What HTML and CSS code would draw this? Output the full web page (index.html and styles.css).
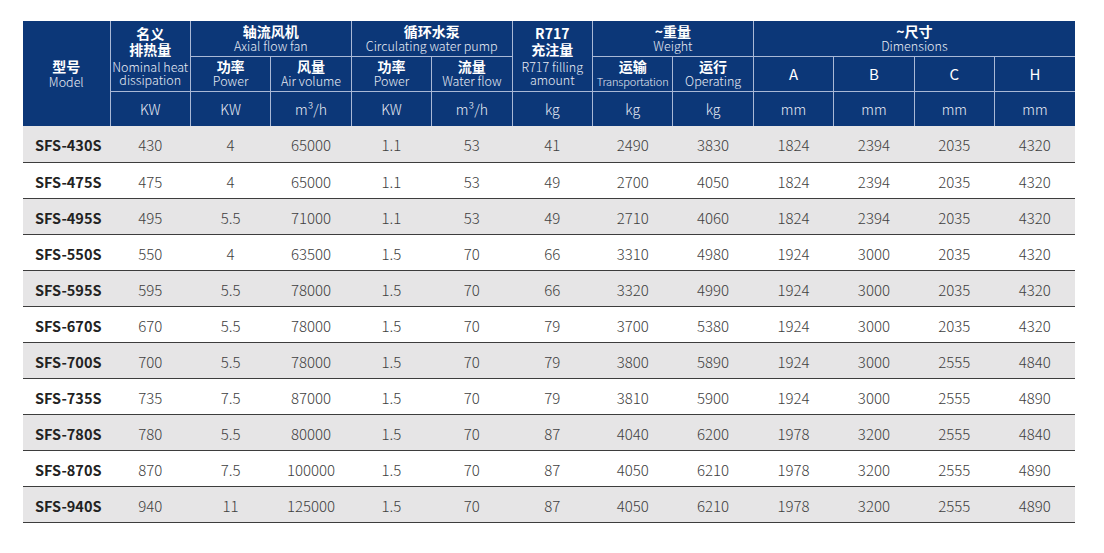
FILE: index.html
```html
<!DOCTYPE html>
<html lang="zh">
<head>
<meta charset="utf-8">
<title>SFS</title>
<link rel="stylesheet" href="styles.css">
</head>
<body>
<div class="page">
<table class="spec">
<colgroup>
<col class="c-model">
<col span="12" class="c-val">
</colgroup>
<thead>
<tr class="h1">
<th rowspan="3" class="model-h"><span class="zh">型号</span><span class="en">Model</span></th>
<th rowspan="2" class="tall"><span class="zh">名义<br>排热量</span><span class="en">Nominal heat<br>dissipation</span></th>
<th colspan="2"><span class="zh">轴流风机</span><span class="en">Axial flow fan</span></th>
<th colspan="2"><span class="zh">循环水泵</span><span class="en">Circulating water pump</span></th>
<th rowspan="2" class="tall"><span class="zh">R717<br>充注量</span><span class="en">R717 filling<br>amount</span></th>
<th colspan="2"><span class="zh">~重量</span><span class="en">Weight</span></th>
<th colspan="4"><span class="zh">~尺寸</span><span class="en">Dimensions</span></th>
</tr>
<tr class="h2">
<th><span class="zh">功率</span><span class="en">Power</span></th>
<th><span class="zh">风量</span><span class="en">Air volume</span></th>
<th><span class="zh">功率</span><span class="en">Power</span></th>
<th><span class="zh">流量</span><span class="en">Water flow</span></th>
<th><span class="zh">运输</span><span class="en small">Transportation</span></th>
<th><span class="zh">运行</span><span class="en">Operating</span></th>
<th class="dim">A</th>
<th class="dim">B</th>
<th class="dim">C</th>
<th class="dim">H</th>
</tr>
<tr class="h3">
<th>KW</th><th>KW</th><th>m³/h</th><th>KW</th><th>m³/h</th><th>kg</th><th>kg</th><th>kg</th><th>mm</th><th>mm</th><th>mm</th><th>mm</th>
</tr>
</thead>
<tbody>
<tr><td class="m">SFS-430S</td><td>430</td><td>4</td><td>65000</td><td>1.1</td><td>53</td><td>41</td><td>2490</td><td>3830</td><td>1824</td><td>2394</td><td>2035</td><td>4320</td></tr>
<tr><td class="m">SFS-475S</td><td>475</td><td>4</td><td>65000</td><td>1.1</td><td>53</td><td>49</td><td>2700</td><td>4050</td><td>1824</td><td>2394</td><td>2035</td><td>4320</td></tr>
<tr><td class="m">SFS-495S</td><td>495</td><td>5.5</td><td>71000</td><td>1.1</td><td>53</td><td>49</td><td>2710</td><td>4060</td><td>1824</td><td>2394</td><td>2035</td><td>4320</td></tr>
<tr><td class="m">SFS-550S</td><td>550</td><td>4</td><td>63500</td><td>1.5</td><td>70</td><td>66</td><td>3310</td><td>4980</td><td>1924</td><td>3000</td><td>2035</td><td>4320</td></tr>
<tr><td class="m">SFS-595S</td><td>595</td><td>5.5</td><td>78000</td><td>1.5</td><td>70</td><td>66</td><td>3320</td><td>4990</td><td>1924</td><td>3000</td><td>2035</td><td>4320</td></tr>
<tr><td class="m">SFS-670S</td><td>670</td><td>5.5</td><td>78000</td><td>1.5</td><td>70</td><td>79</td><td>3700</td><td>5380</td><td>1924</td><td>3000</td><td>2035</td><td>4320</td></tr>
<tr><td class="m">SFS-700S</td><td>700</td><td>5.5</td><td>78000</td><td>1.5</td><td>70</td><td>79</td><td>3800</td><td>5890</td><td>1924</td><td>3000</td><td>2555</td><td>4840</td></tr>
<tr><td class="m">SFS-735S</td><td>735</td><td>7.5</td><td>87000</td><td>1.5</td><td>70</td><td>79</td><td>3810</td><td>5900</td><td>1924</td><td>3000</td><td>2555</td><td>4890</td></tr>
<tr><td class="m">SFS-780S</td><td>780</td><td>5.5</td><td>80000</td><td>1.5</td><td>70</td><td>87</td><td>4040</td><td>6200</td><td>1978</td><td>3200</td><td>2555</td><td>4840</td></tr>
<tr><td class="m">SFS-870S</td><td>870</td><td>7.5</td><td>100000</td><td>1.5</td><td>70</td><td>87</td><td>4050</td><td>6210</td><td>1978</td><td>3200</td><td>2555</td><td>4890</td></tr>
<tr><td class="m">SFS-940S</td><td>940</td><td>11</td><td>125000</td><td>1.5</td><td>70</td><td>87</td><td>4050</td><td>6210</td><td>1978</td><td>3200</td><td>2555</td><td>4890</td></tr>
</tbody>
</table>
</div>
</body>
</html>
```
FILE: styles.css
```css
html, body {
  margin: 0;
  padding: 0;
  background: #ffffff;
}
.page {
  padding: 21px 29px 0 23px;
  font-family: "Noto Sans CJK SC", "Noto Sans", sans-serif;
}
.spec {
  width: 1052px;
  border-collapse: collapse;
  table-layout: fixed;
}
.c-model { width: 87px; }
.c-val { width: 80.4px; }

.spec th {
  background: #0c3778;
  color: #ffffff;
  border: 1px solid #a9b8d6;
  padding: 0;
  text-align: center;
  vertical-align: middle;
  font-weight: 400;
}
.spec thead tr:first-child th { border-top: none; }
.spec th:first-child { border-left: none; }
.spec th:last-child { border-right: none; }
.spec thead tr.h3 th { border-bottom: none; }
.spec th.model-h { border-bottom: none; }

.h1 { height: 35px; }
.h2 { height: 35px; }
.h3 { height: 35px; }

.zh {
  display: block;
  font-size: 14px;
  line-height: 15px;
  font-weight: 700;
}
.en {
  display: block;
  font-size: 12.5px;
  line-height: 14px;
  font-weight: 300;
  color: #e8ecf5;
}
.en.small { font-size: 11px; letter-spacing: -0.1px; }
.tall .zh { line-height: 16px; }
.tall .en { line-height: 13px; margin-top: 3px; }
.model-h .zh { line-height: 17px; }
.dim {
  font-size: 15px;
  font-weight: 700;
}
.h3 th {
  font-size: 14px;
  font-weight: 300;
  color: #e8ecf5;
  padding-top: 1px;
}

.spec td {
  height: 36px;
  padding: 2px 0 0 0;
  box-sizing: border-box;
  text-align: center;
  vertical-align: middle;
  font-size: 15px;
  font-weight: 300;
  color: #404040;
  border-bottom: 1px solid #3d3d3d;
}
.spec tbody tr:nth-child(odd) td { background: #e6e5e6; }
.spec tbody tr:nth-child(even) td { background: #ffffff; }
.spec td.m {
  font-weight: 700;
  color: #222222;
  font-size: 14.5px;
  text-align: left;
  padding-left: 12px;
}
```
